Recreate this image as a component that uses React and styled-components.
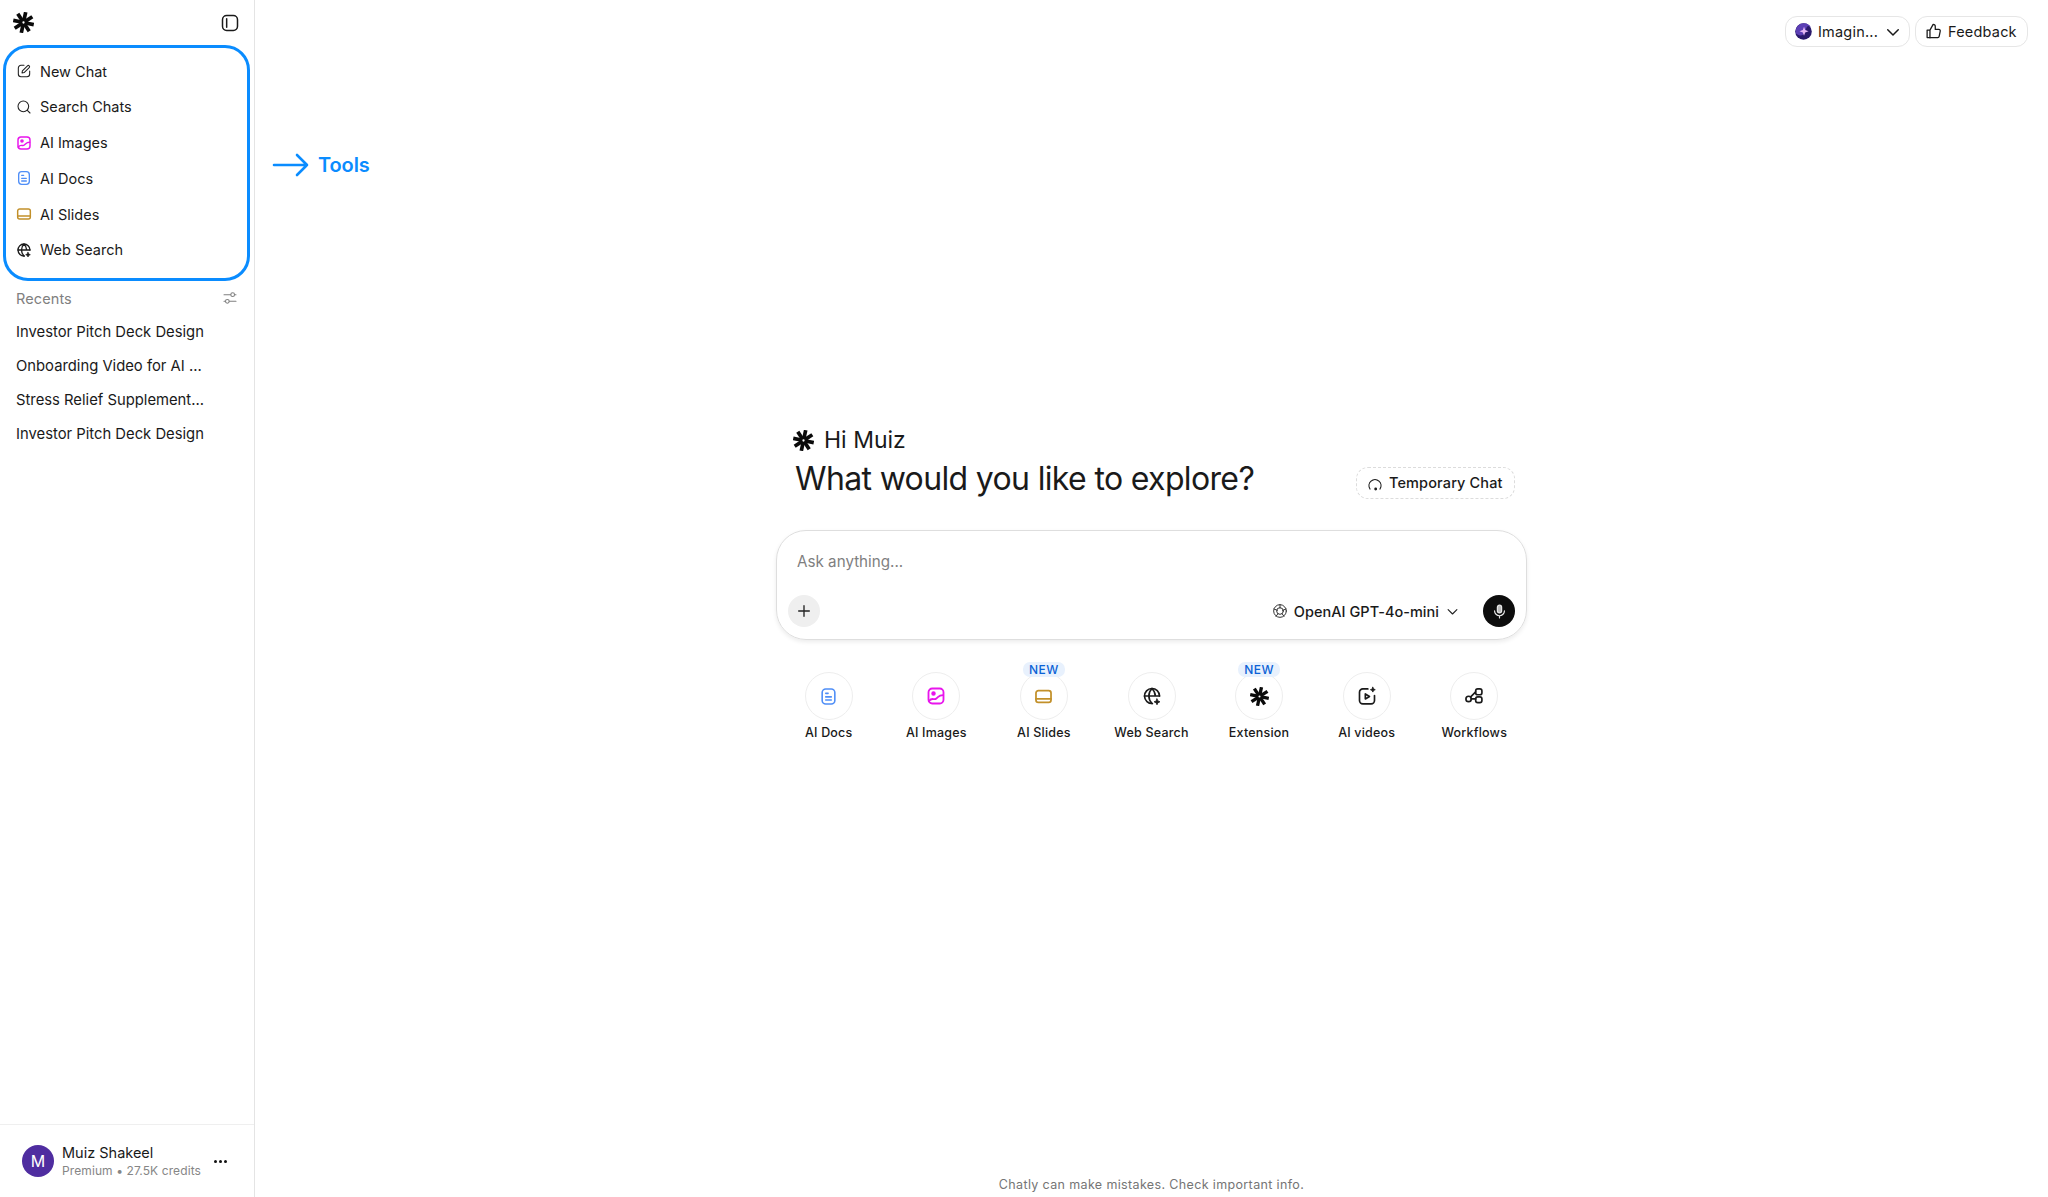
import React from "react";
import styled, { createGlobalStyle } from "styled-components";

const GlobalStyle = createGlobalStyle`
  html, body { margin: 0; padding: 0; background: #fff; }
  body { font-family: "Inter", "Liberation Sans", sans-serif; color: #1a1a1a; }
  * { box-sizing: border-box; }
`;

const Page = styled.div`
  display: flex;
  width: 2048px;
  height: 1197px;
  overflow: hidden;
`;

const Sidebar = styled.aside`
  display: flex;
  flex-direction: column;
  flex: 0 0 255px;
  border-right: 1px solid #e4e4e4;
`;

const SideTop = styled.div`
  display: flex;
  align-items: center;
  justify-content: space-between;
  height: 45px;
  padding: 0 14px 0 13px;
`;

const ToolsBox = styled.nav`
  display: flex;
  flex-direction: column;
  justify-content: center;
  width: 247px;
  height: 236px;
  margin-left: 3px;
  padding: 0 0 5px 10px;
  border: 3px solid #0a8cff;
  border-radius: 25px;
`;

const ToolRow = styled.div`
  display: flex;
  align-items: center;
  gap: 8px;
  height: 35.8px;
  font-size: 14.5px;
`;

const RecentsHead = styled.div`
  display: flex;
  align-items: center;
  justify-content: space-between;
  height: 32px;
  margin-top: 1px;
  padding: 0 16px;
  font-size: 14.5px;
  letter-spacing: 0.1px;
  color: #808080;
`;

const RecentRow = styled.div`
  display: flex;
  align-items: center;
  height: 34px;
  padding-left: 16px;
  font-size: 14.8px;
`;

const Recents = styled.div`
  flex: 1;
  padding-top: 1px;
`;

const UserBar = styled.div`
  display: flex;
  align-items: center;
  height: 73px;
  padding: 0 27px 0 22px;
  border-top: 1px solid #efefef;
`;

const Avatar = styled.div`
  display: flex;
  align-items: center;
  justify-content: center;
  width: 32px;
  height: 32px;
  border-radius: 50%;
  background: #4f2da0;
  color: #fff;
  font-size: 16px;
`;

const UserText = styled.div`
  flex: 1;
  margin-left: 8px;
`;

const UserName = styled.div`
  font-size: 14.5px;
  line-height: 18px;
`;

const UserMeta = styled.div`
  font-size: 12px;
  line-height: 17px;
  letter-spacing: 0.1px;
  color: #868686;
`;

const Dots = styled.div`
  display: flex;
  gap: 2px;
  span { width: 3px; height: 3px; border-radius: 50%; background: #111; }
`;

const Main = styled.main`
  display: flex;
  flex: 1;
  flex-direction: column;
  align-items: center;
  position: relative;
`;

const Callout = styled.div`
  position: absolute;
  left: 17px;
  top: 153px;
  display: flex;
  align-items: center;
  gap: 8px;
  font-size: 20px;
  font-weight: 600;
  letter-spacing: -0.1px;
  color: #0a8cff;
`;

const TopBar = styled.header`
  display: flex;
  justify-content: flex-end;
  gap: 5px;
  width: 100%;
  height: 425px;
  padding: 16px 20px 0 0;
`;

const Pill = styled.div`
  display: flex;
  align-items: center;
  gap: 6px;
  width: ${(p) => p.$w}px;
  height: 31px;
  padding: 0 7px 0 9px;
  border: 1px solid #e6e6e6;
  border-radius: 12px;
  font-size: 14.5px;
  letter-spacing: 0.2px;
  white-space: nowrap;
`;

const PillLabel = styled.span`
  flex: 1;
`;

const Column = styled.section`
  width: 751px;
`;

const Greeting = styled.div`
  display: flex;
  align-items: center;
  gap: 10px;
  height: 30px;
  margin-left: 17px;
  font-size: 23px;
  font-weight: 400;
`;

const TitleRow = styled.div`
  display: flex;
  align-items: center;
  justify-content: space-between;
  height: 44px;
  margin: 1px 12px 30px 19px;
`;

const Title = styled.h1`
  margin: 0;
  font-size: 32px;
  font-weight: 400;
  letter-spacing: -0.65px;
`;

const TempChat = styled.div`
  display: flex;
  align-items: center;
  gap: 6px;
  width: 159px;
  height: 32px;
  margin-top: 9px;
  padding-left: 10px;
  border: 1px dashed #dcdcdc;
  border-radius: 12px;
  font-size: 14.5px;
  font-weight: 500;
  letter-spacing: 0.13px;
`;

const Composer = styled.div`
  display: flex;
  flex-direction: column;
  height: 110px;
  padding: 21px 11px 0 11px;
  border: 1px solid #dedede;
  border-radius: 30px;
  box-shadow: 0 2px 4px rgba(0, 0, 0, 0.08);
`;

const Placeholder = styled.div`
  height: 43px;
  padding-left: 9px;
  font-size: 15.2px;
  line-height: 20px;
  color: #7f7f7f;
`;

const ComposerBar = styled.div`
  display: flex;
  align-items: center;
`;

const PlusButton = styled.div`
  display: flex;
  align-items: center;
  justify-content: center;
  width: 32px;
  height: 32px;
  border-radius: 50%;
  background: #efefef;
`;

const ModelPicker = styled.div`
  display: flex;
  align-items: center;
  gap: 6px;
  margin-left: auto;
  margin-right: 23px;
  font-size: 14.5px;
  font-weight: 500;
  letter-spacing: 0.03px;
`;

const MicButton = styled.div`
  display: flex;
  align-items: center;
  justify-content: center;
  width: 32px;
  height: 32px;
  border-radius: 50%;
  background: #0d0d0d;
`;

const Shortcuts = styled.div`
  display: grid;
  grid-template-columns: repeat(7, 107.6px);
  justify-content: center;
  margin-top: 32px;
`;

const Shortcut = styled.div`
  display: flex;
  flex-direction: column;
  align-items: center;
  position: relative;
`;

const Circle = styled.div`
  display: flex;
  align-items: center;
  justify-content: center;
  width: 48px;
  height: 48px;
  border: 1px solid #eeeeee;
  border-radius: 50%;
`;

const ShortcutLabel = styled.div`
  margin-top: 4px;
  font-size: 12.5px;
  font-weight: 500;
  line-height: 18px;
  letter-spacing: 0.2px;
  white-space: nowrap;
`;

const NewBadge = styled.div`
  position: absolute;
  top: -10px;
  padding: 0 6px;
  border-radius: 7px;
  background: #e8f1fd;
  color: #0b62d6;
  font-size: 12px;
  font-weight: 500;
  line-height: 15px;
  letter-spacing: 0.5px;
`;

const Disclaimer = styled.footer`
  margin-top: auto;
  padding-bottom: 4px;
  font-size: 12.5px;
  line-height: 16px;
  letter-spacing: 0.36px;
  color: #757575;
`;

const Logo = ({ size = 21 }) => (
  <svg width={size} height={size} viewBox="0 0 24 24" fill="#0a0a0a">
    {[0, 45, 90, 135, 180, 225, 270, 315].map((a) => (
      <rect key={a} x="9.9" y="0" width="4.2" height="9.6" transform={`rotate(${a + 12} 12 12)`} />
    ))}
    <circle cx="12" cy="12" r="4" fill="#0a0a0a" />
    <circle cx="12" cy="12" r="1.3" fill="#fff" />
  </svg>
);

const Stroke = ({ size = 16, color = "#222", width = 1.6, children }) => (
  <svg width={size} height={size} viewBox="0 0 24 24" fill="none" stroke={color} strokeWidth={width} strokeLinecap="round" strokeLinejoin="round">
    {children}
  </svg>
);

const DocsIcon = ({ size }) => (
  <Stroke size={size} color="#4f8ef7" width={2}>
    <rect x="4" y="2.5" width="16" height="19" rx="4.5" />
    <path d="M8.5 8h3M8.5 12.5h7M8.5 16.5h7" />
  </Stroke>
);

const ImagesIcon = ({ size }) => (
  <Stroke size={size} color="#e815ec" width={2.2}>
    <rect x="3" y="3" width="18" height="18" rx="4.5" />
    <circle cx="9" cy="9" r="1.6" fill="#e815ec" />
    <path d="M3.5 18c4-5 6-.5 9-3s3-4 8-4" />
  </Stroke>
);

const SlidesIcon = ({ size }) => (
  <Stroke size={size} color="#c2902a" width={2.2}>
    <rect x="2.5" y="4.5" width="19" height="15" rx="3" />
    <path d="M2.5 15h19" />
  </Stroke>
);

const WebIcon = ({ size }) => (
  <Stroke size={size} color="#1a1a1a" width={2}>
    <path d="M12.5 21a9 9 0 1 1 8.5-9" />
    <path d="M3 12h18M12 3c-5 5-5 13 0 18M12 3c2.5 2.5 3.8 5.5 4 9" />
    <path d="M18 15.5l1.1 2.4 2.4 1.1-2.4 1.1L18 22.5l-1.1-2.4-2.4-1.1 2.4-1.1z" fill="#1a1a1a" strokeWidth="1" />
  </Stroke>
);

const VideoIcon = ({ size }) => (
  <Stroke size={size} color="#1a1a1a" width={2}>
    <path d="M13 3.5H7a4 4 0 0 0-4 4v10a4 4 0 0 0 4 4h10a4 4 0 0 0 4-4v-6" />
    <path d="M10 9.5l5 3-5 3z" />
    <path d="M19 1.5l.9 2 2 .9-2 .9-.9 2-.9-2-2-.9 2-.9z" fill="#1a1a1a" strokeWidth="1" />
  </Stroke>
);

const FlowIcon = ({ size }) => (
  <Stroke size={size} color="#1a1a1a" width={2}>
    <circle cx="5.5" cy="15.5" r="3.2" />
    <rect x="14" y="3.5" width="7.5" height="7" rx="2.5" />
    <rect x="14" y="13" width="7.5" height="7" rx="2.5" />
    <path d="M8.7 15.5H14M8 13l6-6" />
  </Stroke>
);

const tools = [
  { label: "New Chat", icon: (
    <Stroke>
      <path d="M12 3.5H7.5a4 4 0 0 0-4 4v9a4 4 0 0 0 4 4h9a4 4 0 0 0 4-4V12" />
      <path d="M9 15l.6-3.2 7.6-7.6a1.8 1.8 0 0 1 2.6 2.6l-7.6 7.6z" />
    </Stroke>
  ) },
  { label: "Search Chats", icon: (
    <Stroke>
      <circle cx="11" cy="11" r="8" />
      <path d="M17 17l4 4" />
    </Stroke>
  ) },
  { label: "AI Images", icon: <ImagesIcon size={16} /> },
  { label: "AI Docs", icon: <DocsIcon size={16} /> },
  { label: "AI Slides", icon: <SlidesIcon size={16} /> },
  { label: "Web Search", icon: <WebIcon size={16} /> },
];

const recents = [
  "Investor Pitch Deck Design",
  "Onboarding Video for AI ...",
  "Stress Relief Supplement...",
  "Investor Pitch Deck Design",
];

const shortcuts = [
  { label: "AI Docs", icon: <DocsIcon size={19} /> },
  { label: "AI Images", icon: <ImagesIcon size={20} /> },
  { label: "AI Slides", icon: <SlidesIcon size={19} />, isNew: true },
  { label: "Web Search", icon: <WebIcon size={20} /> },
  { label: "Extension", icon: <Logo size={19} />, isNew: true },
  { label: "AI videos", icon: <VideoIcon size={20} /> },
  { label: "Workflows", icon: <FlowIcon size={20} /> },
];

export default function App() {
  return (
    <Page>
      <GlobalStyle />
      <Sidebar>
        <SideTop>
          <Logo />
          <Stroke size={20} color="#1a1a1a" width={1.8}>
            <rect x="3" y="3" width="18" height="18" rx="5" />
            <path d="M8 7v10" />
          </Stroke>
        </SideTop>
        <ToolsBox>
          {tools.map((t) => (
            <ToolRow key={t.label}>{t.icon}{t.label}</ToolRow>
          ))}
        </ToolsBox>
        <RecentsHead>
          Recents
          <Stroke size={16} color="#808080" width={1.6}>
            <path d="M3 7h10M19 7h2M3 17h2M11 17h10" />
            <circle cx="16" cy="7" r="2.8" />
            <circle cx="8" cy="17" r="2.8" />
          </Stroke>
        </RecentsHead>
        <Recents>
          {recents.map((r, i) => (
            <RecentRow key={i}>{r}</RecentRow>
          ))}
        </Recents>
        <UserBar>
          <Avatar>M</Avatar>
          <UserText>
            <UserName>Muiz Shakeel</UserName>
            <UserMeta>Premium • 27.5K credits</UserMeta>
          </UserText>
          <Dots><span /><span /><span /></Dots>
        </UserBar>
      </Sidebar>
      <Main>
        <Callout>
          <svg width="38" height="24" viewBox="0 0 38 24" fill="none" stroke="#0a8cff" strokeWidth="2.6" strokeLinecap="round" strokeLinejoin="round">
            <path d="M2 12h33M25 2l10 10-10 10" />
          </svg>
          Tools
        </Callout>
        <TopBar>
          <Pill $w={125}>
            <svg width="17" height="17" viewBox="0 0 16 16">
              <circle cx="8" cy="8" r="7.8" fill="#2a1a6b" />
              <path d="M1 10c3 3 8 2 9-3s3-5 5-3c-1-3-6-5-10-3S0 7 1 10z" fill="#5c3fb5" />
              <path d="M8.5 3.5l1.1 3.2 3.2 1.1-3.2 1.1-1.1 3.2-1.1-3.2-3.2-1.1 3.2-1.1z" fill="#e5b8f5" />
            </svg>
            <PillLabel>Imagin...</PillLabel>
            <Stroke size={18} color="#1a1a1a" width={2}><path d="M5 9l7 7 7-7" /></Stroke>
          </Pill>
          <Pill $w={113}>
            <Stroke size={17} color="#1a1a1a" width={1.8}>
              <path d="M7 10v11M7 10l4.5-8a3 3 0 0 1 3 3v4h5a2 2 0 0 1 2 2.4l-1.5 7.6a2 2 0 0 1-2 1.6H3V10z" />
            </Stroke>
            Feedback
          </Pill>
        </TopBar>
        <Column>
          <Greeting><Logo />Hi Muiz</Greeting>
          <TitleRow>
            <Title>What would you like to explore?</Title>
            <TempChat>
              <Stroke size={16} color="#1a1a1a" width={1.8}>
                <path d="M4.5 21a9 9 0 1 1 15 0" />
                <circle cx="13" cy="21" r="1.2" fill="#1a1a1a" />
              </Stroke>
              Temporary Chat
            </TempChat>
          </TitleRow>
          <Composer>
            <Placeholder>Ask anything...</Placeholder>
            <ComposerBar>
              <PlusButton>
                <Stroke size={16} color="#222" width={2}><path d="M12 4v16M4 12h16" /></Stroke>
              </PlusButton>
              <ModelPicker>
                <Stroke size={16} color="#333" width={1.5}>
                  <circle cx="12" cy="12" r="9.5" />
                  <circle cx="12" cy="12" r="5" />
                  <path d="M12 2.5v5M21 9l-5 2M18 20l-3-4M6 20l3-4M3 9l5 2" />
                </Stroke>
                OpenAI GPT-4o-mini
                <Stroke size={15} color="#222" width={1.8}><path d="M5 9l7 7 7-7" /></Stroke>
              </ModelPicker>
              <MicButton>
                <Stroke size={17} color="#e8e8e8" width={1.7}>
                  <rect x="9" y="3" width="6" height="11" rx="3" fill="#bdbdbd" />
                  <path d="M5 11a7 7 0 0 0 14 0M12 18v3" />
                </Stroke>
              </MicButton>
            </ComposerBar>
          </Composer>
          <Shortcuts>
            {shortcuts.map((s) => (
              <Shortcut key={s.label}>
                {s.isNew && <NewBadge>NEW</NewBadge>}
                <Circle>{s.icon}</Circle>
                <ShortcutLabel>{s.label}</ShortcutLabel>
              </Shortcut>
            ))}
          </Shortcuts>
        </Column>
        <Disclaimer>Chatly can make mistakes. Check important info.</Disclaimer>
      </Main>
    </Page>
  );
}
